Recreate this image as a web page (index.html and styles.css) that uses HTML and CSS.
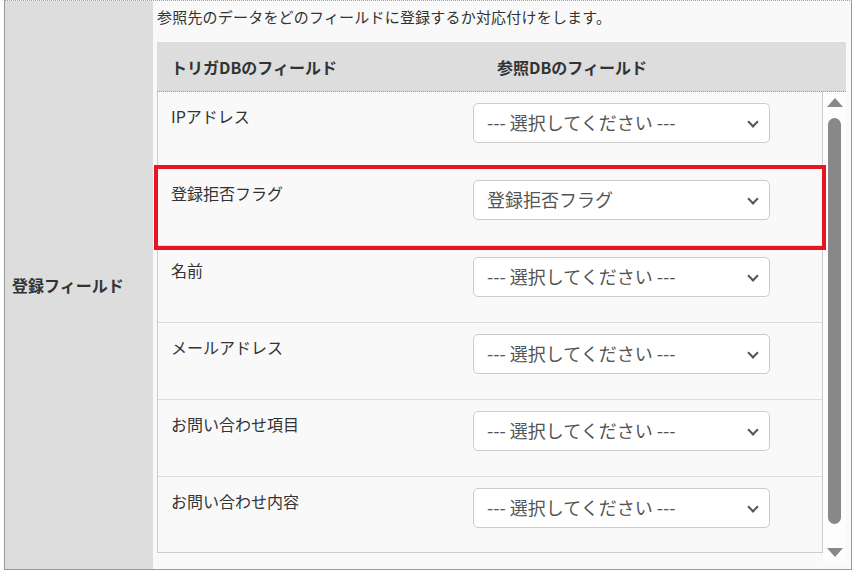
FILE: index.html
```
<!DOCTYPE html>
<html lang="ja">
<head>
    <meta charset="UTF-8">
    <meta name="viewport" content="width=device-width, initial-scale=1.0">
    <title>登録フィールド</title>
    <link rel="stylesheet" href="styles.css">
</head>
<body>
    <div class="setting-row">
        <div class="setting-label">登録フィールド</div>

        <div class="setting-body">
            <p class="description">参照先のデータをどのフィールドに登録するか対応付けをします。</p>

            <div class="map-header">
                <div class="map-col-trigger">トリガDBのフィールド</div>
                <div class="map-col-ref">参照DBのフィールド</div>
            </div>

            <div class="scroll-wrap">
                <div class="field-list">
                    <div class="field-row">
                        <span class="field-name">IPアドレス</span>
                        <div class="select-box">
                            <select>
                                <option selected>--- 選択してください ---</option>
                            </select>
                        </div>
                    </div>

                    <div class="field-row highlighted">
                        <span class="field-name">登録拒否フラグ</span>
                        <div class="select-box">
                            <select>
                                <option>--- 選択してください ---</option>
                                <option selected>登録拒否フラグ</option>
                            </select>
                        </div>
                    </div>

                    <div class="field-row">
                        <span class="field-name">名前</span>
                        <div class="select-box">
                            <select>
                                <option selected>--- 選択してください ---</option>
                            </select>
                        </div>
                    </div>

                    <div class="field-row">
                        <span class="field-name">メールアドレス</span>
                        <div class="select-box">
                            <select>
                                <option selected>--- 選択してください ---</option>
                            </select>
                        </div>
                    </div>

                    <div class="field-row">
                        <span class="field-name">お問い合わせ項目</span>
                        <div class="select-box">
                            <select>
                                <option selected>--- 選択してください ---</option>
                            </select>
                        </div>
                    </div>

                    <div class="field-row">
                        <span class="field-name">お問い合わせ内容</span>
                        <div class="select-box">
                            <select>
                                <option selected>--- 選択してください ---</option>
                            </select>
                        </div>
                    </div>
                </div>

                <div class="scrollbar">
                    <div class="arrow-up"></div>
                    <div class="track">
                        <div class="thumb"></div>
                    </div>
                    <div class="arrow-down"></div>
                </div>
            </div>
        </div>
    </div>
</body>
</html>
```

FILE: styles.css
```
* {
    margin: 0;
    padding: 0;
    box-sizing: border-box;
    font-family: 'Noto Sans CJK JP', 'Noto Sans', sans-serif;
}

body {
    background-color: #fff;
    color: #333;
}

.setting-row {
    display: flex;
    width: 848px;
    height: 570px;
    margin-left: 4px;
    border: 1px solid #999;
    border-top: 1px dotted #999;
}

.setting-label {
    width: 148px;
    background-color: #ddd;
    display: flex;
    align-items: center;
    padding-left: 7px;
    font-size: 16px;
    font-weight: bold;
    color: #333;
}

.setting-body {
    flex: 1;
    background-color: #f9f9f9;
    padding: 4px 5px 6px 4px;
}

.description {
    font-size: 15px;
    line-height: 24px;
    letter-spacing: 0.2px;
    margin-bottom: 13px;
    color: #333;
}

.map-header {
    display: flex;
    align-items: center;
    height: 50px;
    background-color: #ddd;
    border-bottom: 1px dotted #999;
    font-size: 16px;
    font-weight: bold;
    color: #333;
}

.map-col-trigger {
    width: 326px;
    padding-left: 14px;
}

.map-col-ref {
    padding-left: 14px;
}

.scroll-wrap {
    display: flex;
    height: 471px;
}

.field-list {
    width: 666px;
    align-self: flex-start;
    border: 1px solid #ccc;
    border-top: none;
}

.field-row {
    display: flex;
    align-items: flex-start;
    height: 77px;
    padding: 11px 0 0 13px;
    border-bottom: 1px solid #ddd;
}

.field-row:last-child {
    height: 75px;
    border-bottom: none;
}

.field-row.highlighted {
    position: relative;
    z-index: 1;
    outline: 4px solid #e8141e;
}

.field-name {
    width: 302px;
    margin-top: 1px;
    font-size: 16px;
    line-height: 24px;
    color: #333;
}

.select-box {
    position: relative;
    width: 297px;
}

.select-box select {
    appearance: none;
    -webkit-appearance: none;
    width: 100%;
    height: 40px;
    padding: 0 30px 2px 13px;
    border: 1px solid #ccc;
    border-radius: 5px;
    background-color: #fff;
    font-size: 18px;
    color: #555;
    outline: none;
}

.select-box::after {
    content: '';
    position: absolute;
    top: 15px;
    right: 13px;
    width: 6px;
    height: 6px;
    border-right: 2px solid #555;
    border-bottom: 2px solid #555;
    transform: rotate(45deg);
    pointer-events: none;
}

.scrollbar {
    width: 23px;
    display: flex;
    flex-direction: column;
    align-items: center;
    padding: 6px 0;
    background-color: #fdfdfd;
}

.arrow-up {
    width: 0;
    height: 0;
    border-left: 8px solid transparent;
    border-right: 8px solid transparent;
    border-bottom: 9px solid #888;
}

.arrow-down {
    width: 0;
    height: 0;
    border-left: 8px solid transparent;
    border-right: 8px solid transparent;
    border-top: 9px solid #888;
}

.track {
    flex: 1;
    padding-top: 11px;
}

.thumb {
    width: 13px;
    height: 406px;
    border-radius: 7px;
    background-color: #888;
}
```
